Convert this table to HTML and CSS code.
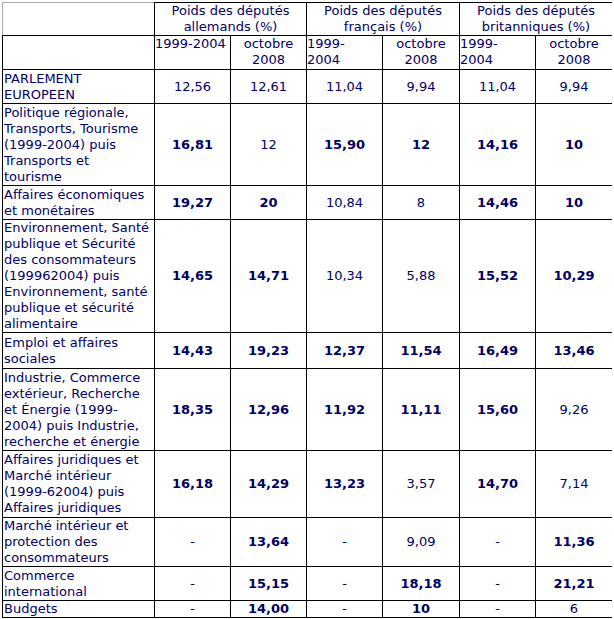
FILE: index.html
```html
<!DOCTYPE html>
<html lang="fr">
<head>
<meta charset="utf-8">
<title>Poids des députés</title>
<link rel="stylesheet" href="styles.css">
</head>
<body>
<table class="grid">
  <colgroup>
    <col class="c-label"><col class="c-num"><col class="c-num"><col class="c-num"><col class="c-num7"><col class="c-num"><col class="c-num7">
  </colgroup>
  <tr class="r33">
    <td class="corner"></td>
    <td colspan="2" class="head">Poids des députés<br>allemands (%)</td>
    <td colspan="2" class="head">Poids des députés<br>français (%)</td>
    <td colspan="2" class="head">Poids des députés<br>britanniques (%)</td>
  </tr>
  <tr class="r34">
    <td></td>
    <td class="period">1999-2004</td>
    <td class="oct">octobre<br>2008</td>
    <td class="period">1999-<br>2004</td>
    <td class="oct">octobre<br>2008</td>
    <td class="period">1999-<br>2004</td>
    <td class="oct">octobre<br>2008</td>
  </tr>
  <tr class="r34">
    <td class="label">PARLEMENT<br>EUROPEEN</td>
    <td>12,56</td><td>12,61</td><td>11,04</td><td>9,94</td><td>11,04</td><td>9,94</td>
  </tr>
  <tr class="r82">
    <td class="label">Politique régionale,<br>Transports, Tourisme<br>(1999-2004) puis<br>Transports et<br>tourisme</td>
    <td class="b">16,81</td><td>12</td><td class="b">15,90</td><td class="b">12</td><td class="b">14,16</td><td class="b">10</td>
  </tr>
  <tr class="r34">
    <td class="label">Affaires économiques<br>et monétaires</td>
    <td class="b">19,27</td><td class="b">20</td><td>10,84</td><td>8</td><td class="b">14,46</td><td class="b">10</td>
  </tr>
  <tr class="r113">
    <td class="label">Environnement, Santé<br>publique et Sécurité<br>des consommateurs<br>(199962004) puis<br>Environnement, santé<br>publique et sécurité<br>alimentaire</td>
    <td class="b">14,65</td><td class="b">14,71</td><td>10,34</td><td>5,88</td><td class="b">15,52</td><td class="b">10,29</td>
  </tr>
  <tr class="r36">
    <td class="label">Emploi et affaires<br>sociales</td>
    <td class="b">14,43</td><td class="b">19,23</td><td class="b">12,37</td><td class="b">11,54</td><td class="b">16,49</td><td class="b">13,46</td>
  </tr>
  <tr class="r82">
    <td class="label">Industrie, Commerce<br>extérieur, Recherche<br>et Énergie (1999-<br>2004) puis Industrie,<br>recherche et énergie</td>
    <td class="b">18,35</td><td class="b">12,96</td><td class="b">11,92</td><td class="b">11,11</td><td class="b">15,60</td><td>9,26</td>
  </tr>
  <tr class="r67">
    <td class="label">Affaires juridiques et<br>Marché intérieur<br>(1999-62004) puis<br>Affaires juridiques</td>
    <td class="b">16,18</td><td class="b">14,29</td><td class="b">13,23</td><td>3,57</td><td class="b">14,70</td><td>7,14</td>
  </tr>
  <tr class="r49">
    <td class="label">Marché intérieur et<br>protection des<br>consommateurs</td>
    <td>-</td><td class="b">13,64</td><td>-</td><td>9,09</td><td>-</td><td class="b">11,36</td>
  </tr>
  <tr class="r34">
    <td class="label">Commerce<br>international</td>
    <td>-</td><td class="b">15,15</td><td>-</td><td class="b">18,18</td><td>-</td><td class="b">21,21</td>
  </tr>
  <tr class="r16">
    <td class="label">Budgets</td>
    <td>-</td><td class="b">14,00</td><td>-</td><td class="b">10</td><td>-</td><td>6</td>
  </tr>
</table>
</body>
</html>
```
FILE: styles.css
```css
html, body {
  background: #ffffff;
}
body {
  margin: 2px;
  font-family: "DejaVu Sans", Verdana, sans-serif;
  font-size: 13px;
  line-height: 16px;
  color: #000066;
}
.grid {
  border-collapse: collapse;
  table-layout: fixed;
  width: 610px;
}
.c-label { width: 152px; }
.c-num { width: 76px; }
.c-num7 { width: 77px; }
.grid td {
  border: 1px solid #000000;
  padding: 0 1px;
  text-align: center;
  vertical-align: middle;
  white-space: nowrap;
  overflow: hidden;
}
.grid td.corner {
  border-top-color: #a8a8a8;
  border-left-color: #a8a8a8;
}
.grid td.label {
  text-align: left;
}
.grid td.period {
  text-align: left;
  vertical-align: top;
  padding: 0;
}
.grid td.oct {
  vertical-align: top;
}
.grid td.b {
  font-weight: bold;
}
.r16 { height: 16px; }
.r33 { height: 33px; }
.r34 { height: 34px; }
.r36 { height: 36px; }
.r49 { height: 49px; }
.r67 { height: 67px; }
.r82 { height: 82px; }
.r113 { height: 113px; }
```
